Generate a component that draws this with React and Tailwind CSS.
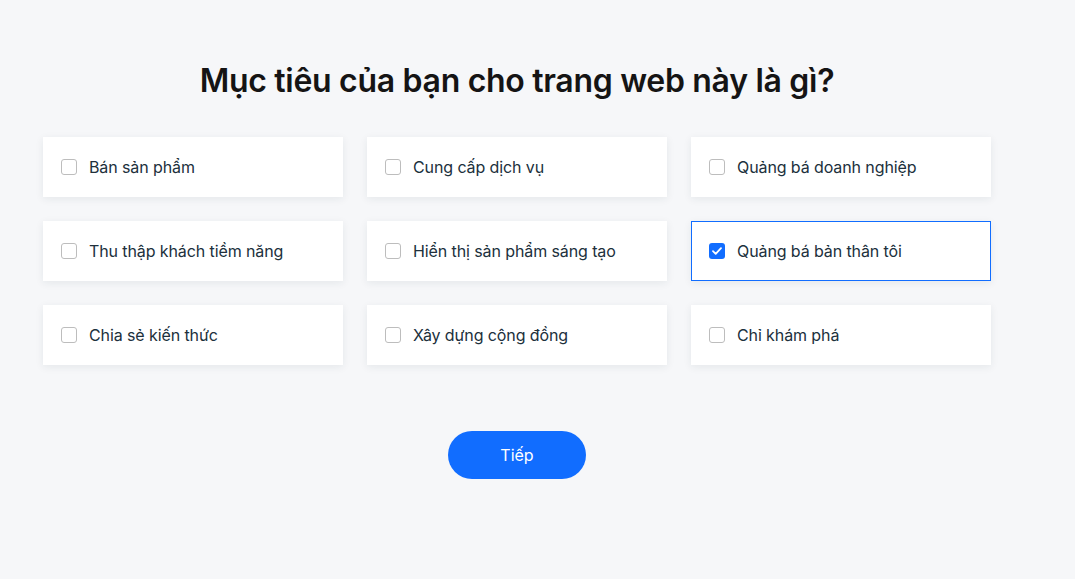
import { useState } from "react";

const goals = [
	"Bán sản phẩm",
	"Cung cấp dịch vụ",
	"Quảng bá doanh nghiệp",
	"Thu thập khách tiềm năng",
	"Hiển thị sản phẩm sáng tạo",
	"Quảng bá bản thân tôi",
	"Chia sẻ kiến thức",
	"Xây dựng cộng đồng",
	"Chỉ khám phá",
];

export default function App() {
	const [selected, setSelected] = useState(["Quảng bá bản thân tôi"]);

	const toggle = (g) => {
		setSelected((s) => (s.includes(g) ? s.filter((x) => x !== g) : [...s, g]));
	};

	return (
		<div className="min-h-[579px] bg-[#f6f7f9] font-['Inter','Noto_Sans',sans-serif] text-[#20303c]">
			<div className="w-[1034px] pt-[60px] flex flex-col items-center">
				<h1 className="text-[32px] leading-[42px] font-semibold tracking-[-0.3px] text-[#151414]">
					Mục tiêu của bạn cho trang web này là gì?
				</h1>

				{/* Options grid */}
				<div className="grid grid-cols-3 gap-6 mt-[35px] w-[948px]">
					{goals.map((g) => {
						const on = selected.includes(g);
						return (
							<button
								key={g}
								onClick={() => toggle(g)}
								className={`h-[60px] bg-white flex items-center gap-3 px-[17px] text-left shadow-[0_2px_8px_rgba(22,45,61,0.08)] border ${on ? "border-[#116dff]" : "border-transparent"}`}
							>
								<span
									className={`w-4 h-4 rounded-[3px] flex items-center justify-center shrink-0 ${on ? "bg-[#116dff]" : "border border-[#bdbdbd] bg-white"}`}
								>
									{on && (
										<svg width="10" height="8" viewBox="0 0 10 8" fill="none">
											<path d="M1 4.2L3.7 6.8L9 1.2" stroke="white" strokeWidth="1.8" strokeLinecap="round" strokeLinejoin="round" />
										</svg>
									)}
								</span>
								<span className="text-[16px] leading-6 tracking-[-0.1px]">{g}</span>
							</button>
						);
					})}
				</div>

				<button className="mt-[66px] w-[138px] h-12 rounded-full bg-[#116dff] text-white text-[16px] hover:bg-[#0f62e6]">
					Tiếp
				</button>
			</div>
		</div>
	);
}
